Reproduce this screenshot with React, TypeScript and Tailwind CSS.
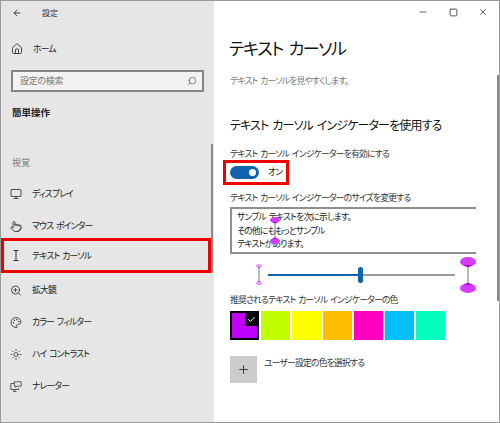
import React from "react";
import { ArrowLeft, Home, Search, Monitor, Pointer, ZoomIn, Palette, Sun, Minus, Square, X, Plus, Check } from "lucide-react";

const small = "whitespace-nowrap text-[8.8px] tracking-[-0.8px] [word-spacing:1.5px]";

function IBeam() {
  return (
    <svg width="12" height="13" viewBox="0 0 12 13" fill="none" stroke="currentColor" strokeWidth="1">
      <path d="M3.5 1.5h5M6 1.5v10M3.5 11.5h5" />
    </svg>
  );
}

function Narrator() {
  return (
    <svg width="14" height="13" viewBox="0 0 14 13" fill="none" stroke="currentColor" strokeWidth="0.9">
      <path d="M5 3H1v7h9V8" />
      <path d="M3.5 12.2h4M5.5 10v2" />
      <path d="M5 1h8v5H8.5L6.5 7.5V6H5z" />
    </svg>
  );
}

function NavRow({ icon, label, active }: { icon: React.ReactNode; label: string; active?: boolean }) {
  return (
    <div className={active ? "mb-[1px] mt-[-4px] flex h-[35px] w-[210px] items-center border-[3px] border-[#f00000] pl-[6px]" : "flex h-[32px] items-center pl-[9px]"}>
      <span className="flex w-[12px] justify-center text-[#333]">{icon}</span>
      <span className={`ml-[10px] text-[#222] ${small}`}>{label}</span>
    </div>
  );
}

function Indicator({ r, l, color }: { r: number; l: number; color: string }) {
  const w = r * 2;
  return (
    <svg width={w} height={2 * r + l} viewBox={`0 0 ${w} ${2 * r + l}`} className="block">
      <line x1={r} x2={r} y1={r / 2} y2={r * 1.5 + l} stroke="#777" strokeWidth="1" />
      <ellipse cx={r} cy={r * 0.6} rx={r} ry={r * 0.6} fill={color} />
      <path d={`M${r * 0.45} ${r} L${r} ${r * 1.3} L${r * 1.55} ${r} Z`} fill="#b000e8" />
      <ellipse cx={r} cy={r * 1.4 + l} rx={r} ry={r * 0.6} fill={color} />
      <path d={`M${r * 0.45} ${r + l} L${r} ${r * 0.7 + l} L${r * 1.55} ${r + l} Z`} fill="#b000e8" />
    </svg>
  );
}

export default function App() {
  const swatches = ["#c1ff00", "#ffff00", "#ffbf00", "#ff00bf", "#00bfff", "#00ffbf"];
  return (
    <div className="flex h-[423px] w-[500px] overflow-hidden border border-[#9a9a9a] bg-white font-['Noto_Sans_CJK_JP',sans-serif] [font-feature-settings:'palt']">
      <aside className="relative flex h-full w-[213px] shrink-0 flex-col bg-[#e6e6e6]">
        <div className="flex h-[22px] items-center pl-[11px] pt-[1px] text-[#333]">
          <ArrowLeft size={10} strokeWidth={2.2} />
          <span className="ml-[20px] text-[8px] text-[#333]">設定</span>
        </div>
        <div className="mt-[10px] flex h-[32px] items-center pl-[10px]">
          <span className="flex w-[12px] justify-center text-[#333]"><Home size={12} strokeWidth={1.8} /></span>
          <span className={`ml-[10px] text-[#222] ${small}`}>ホーム</span>
        </div>
        <div className="ml-[10px] mt-[5px] flex h-[22px] w-[193px] items-center justify-between border-[2px] border-[#858585] bg-[#f2f2f2] pl-[7px] pr-[5px]">
          <span className="text-[9px] tracking-[-0.3px] text-[#777]">設定の検索</span>
          <Search size={10} strokeWidth={1.6} className="-scale-x-100 text-[#555]" />
        </div>
        <div className="ml-[11px] mt-[9px] text-[9.5px] font-bold leading-[22px] text-[#222]">簡単操作</div>
        <div className="ml-[11px] mt-[32px] text-[9px] leading-[16px] text-[#777]">視覚</div>
        <div className="mt-[7px] flex flex-col">
          <NavRow icon={<Monitor size={12} strokeWidth={1.7} />} label="ディスプレイ" />
          <NavRow icon={<Pointer size={13} strokeWidth={1.7} />} label="マウス ポインター" />
          <NavRow active icon={<IBeam />} label="テキスト カーソル" />
          <NavRow icon={<ZoomIn size={13} strokeWidth={1.7} />} label="拡大鏡" />
          <NavRow icon={<Palette size={13} strokeWidth={1.7} />} label="カラー フィルター" />
          <NavRow icon={<Sun size={13} strokeWidth={1.6} />} label="ハイ コントラスト" />
          <NavRow icon={<Narrator />} label="ナレーター" />
        </div>
        <div className="absolute right-[1px] top-[143px] h-[129px] w-[2px] bg-[#8a8a8a]" />
      </aside>

      <main className="relative flex min-w-0 flex-1 flex-col pl-[16px]">
        <div className="flex h-[22px] items-center justify-end pr-[1px] text-[#555]">
          <span className="flex w-[30px] justify-center"><Minus size={10} strokeWidth={2.2} /></span>
          <span className="flex w-[30px] justify-center"><Square size={9} strokeWidth={2.6} /></span>
          <span className="flex w-[30px] justify-center"><X size={10} strokeWidth={2.2} /></span>
        </div>
        <h1 className="mt-[11px] -ml-[1px] whitespace-nowrap text-[17px] font-normal leading-[28px] tracking-[-1.3px] text-[#111] [word-spacing:3px]">テキスト カーソル</h1>
        <p className={`mt-[12px] leading-[14px] text-[#777] ${small}`}>テキスト カーソルを見やすくします。</p>
        <h2 className="mt-[26px] whitespace-nowrap text-[12px] font-normal leading-[22px] tracking-[-0.85px] text-[#111] [word-spacing:2px]">テキスト カーソル インジケーターを使用する</h2>
        <div className={`mt-[11px] leading-[14px] text-[#333] ${small}`}>テキスト カーソル インジケーターを有効にする</div>
        <div className="-ml-[7px] -mt-[1px] flex h-[25px] w-[66px] items-center border-[3px] border-[#f00000] pl-[4px]">
          <span className="flex h-[13px] w-[29px] shrink-0 items-center justify-end rounded-full bg-[#0f64ad] pr-[3px]">
            <span className="h-[7px] w-[7px] rounded-full bg-white" />
          </span>
          <span className={`ml-[9px] leading-none text-[#222] ${small}`}>オン</span>
        </div>
        <div className={`mt-[6px] leading-[14px] text-[#333] ${small}`}>テキスト カーソル インジケーターのサイズを変更する</div>
        <div className={`relative mt-[2px] h-[47px] w-[246px] border-y-2 border-l-2 border-[#8f8f8f] pl-[5px] pt-[1px] leading-[13.5px] text-[#222] ${small}`}>
          <div>サンプル テキストを次に示します。</div>
          <div>その他にももっとサンプル</div>
          <div>テキストがあります。</div>
          <div className="absolute left-[38px] top-[8px]"><Indicator r={5} l={17} color="#d33bff" /></div>
        </div>
        <div className="ml-[26px] flex h-[41px] w-[226px] items-center">
          <Indicator r={3} l={15} color="#e79bff" />
          <div className="relative ml-[6px] flex h-[2px] w-[187px] bg-[#9a9a9a]">
            <div className="h-full w-[93px] bg-[#0f64ad]" />
            <div className="absolute left-[90px] top-[-7px] h-[16px] w-[5px] rounded-full bg-[#0f64ad]" />
          </div>
          <div className="ml-[5px]"><Indicator r={8} l={20} color="#d33bff" /></div>
        </div>
        <div className={`mt-[-2px] leading-[14px] text-[#333] ${small}`}>推奨されるテキスト カーソル インジケーターの色</div>
        <div className="mt-[4px] flex gap-[2px]">
          <div className="relative h-[29px] w-[29px] border-[2px] border-black bg-[#bf00ff]">
            <div className="absolute right-0 top-0 flex h-[13px] w-[12px] items-center justify-center bg-black text-white">
              <Check size={9} strokeWidth={2.5} />
            </div>
          </div>
          {swatches.map((c) => (
            <div key={c} className="h-[29px] w-[29px]" style={{ backgroundColor: c }} />
          ))}
        </div>
        <div className="mt-[16px] flex items-start">
          <div className="flex h-[27px] w-[27px] items-center justify-center bg-[#cccccc] text-[#333]">
            <Plus size={13} strokeWidth={1.8} />
          </div>
          <span className={`ml-[7px] leading-[14px] text-[#333] ${small}`}>ユーザー設定の色を選択する</span>
        </div>
        <div className="absolute right-[0px] top-[74px] h-[226px] w-[2px] bg-[#8a8a8a]" />
      </main>
    </div>
  );
}
